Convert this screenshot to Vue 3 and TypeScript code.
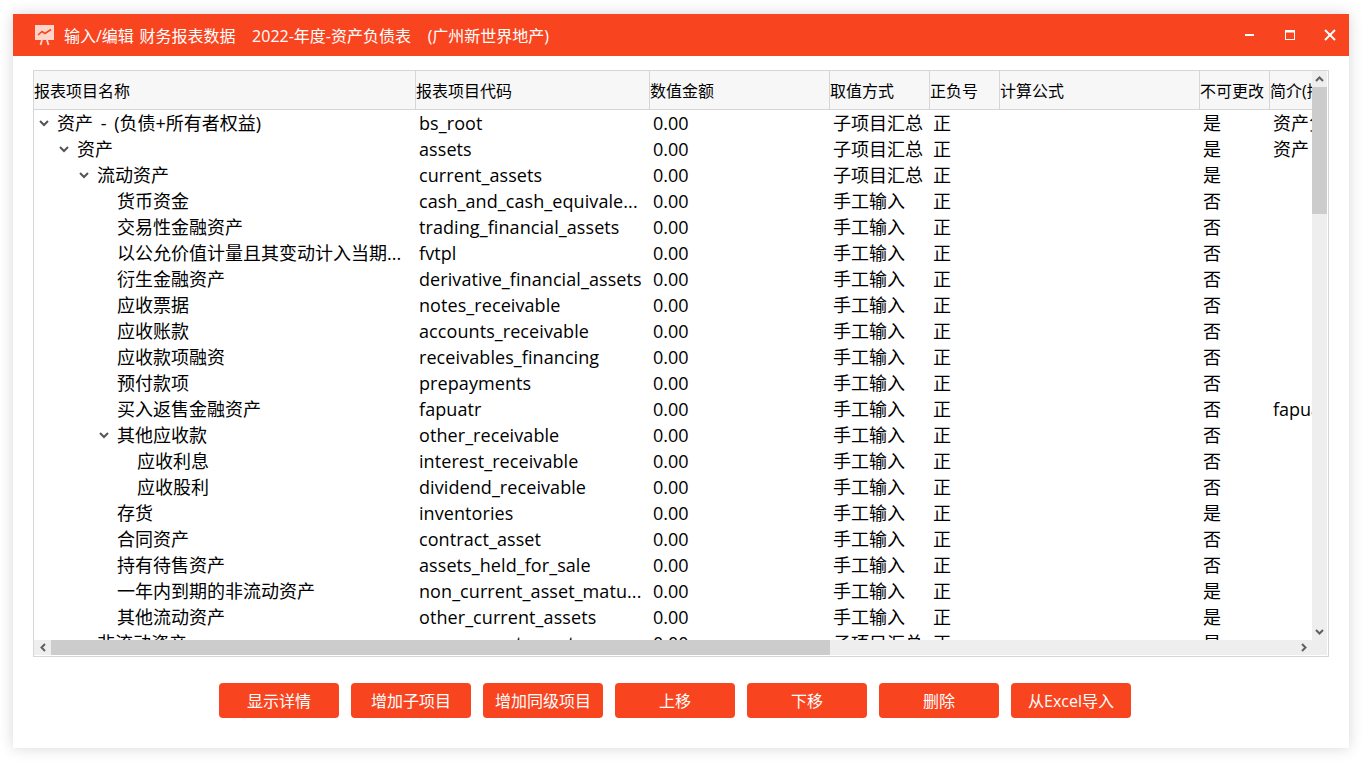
<script setup lang="ts">
interface Row {
  name: string
  code: string
  mode: string
  locked: string
  depth: number
  open?: boolean
  note?: string
}

const titleText = '输入/编辑 财务报表数据   2022-年度-资产负债表   (广州新世界地产)'

const columns: { label: string; width: number }[] = [
  { label: '报表项目名称', width: 382 },
  { label: '报表项目代码', width: 234 },
  { label: '数值金额', width: 180 },
  { label: '取值方式', width: 100 },
  { label: '正负号', width: 70 },
  { label: '计算公式', width: 200 },
  { label: '不可更改', width: 70 },
  { label: '简介(描述)', width: 120 },
]

const gridColumns = columns.map((c) => `${c.width}px`).join(' ')

const hand = '手工输入'
const sum = '子项目汇总'

const rows: Row[] = [
  { name: '资产 - (负债+所有者权益)', code: 'bs_root', mode: sum, locked: '是', depth: 0, open: true, note: '资产负债表' },
  { name: '资产', code: 'assets', mode: sum, locked: '是', depth: 1, open: true, note: '资产' },
  { name: '流动资产', code: 'current_assets', mode: sum, locked: '是', depth: 2, open: true },
  { name: '货币资金', code: 'cash_and_cash_equivale...', mode: hand, locked: '否', depth: 3 },
  { name: '交易性金融资产', code: 'trading_financial_assets', mode: hand, locked: '否', depth: 3 },
  { name: '以公允价值计量且其变动计入当期...', code: 'fvtpl', mode: hand, locked: '否', depth: 3 },
  { name: '衍生金融资产', code: 'derivative_financial_assets', mode: hand, locked: '否', depth: 3 },
  { name: '应收票据', code: 'notes_receivable', mode: hand, locked: '否', depth: 3 },
  { name: '应收账款', code: 'accounts_receivable', mode: hand, locked: '否', depth: 3 },
  { name: '应收款项融资', code: 'receivables_financing', mode: hand, locked: '否', depth: 3 },
  { name: '预付款项', code: 'prepayments', mode: hand, locked: '否', depth: 3 },
  { name: '买入返售金融资产', code: 'fapuatr', mode: hand, locked: '否', depth: 3, note: 'fapuatr' },
  { name: '其他应收款', code: 'other_receivable', mode: hand, locked: '否', depth: 3, open: true },
  { name: '应收利息', code: 'interest_receivable', mode: hand, locked: '否', depth: 4 },
  { name: '应收股利', code: 'dividend_receivable', mode: hand, locked: '否', depth: 4 },
  { name: '存货', code: 'inventories', mode: hand, locked: '是', depth: 3 },
  { name: '合同资产', code: 'contract_asset', mode: hand, locked: '否', depth: 3 },
  { name: '持有待售资产', code: 'assets_held_for_sale', mode: hand, locked: '否', depth: 3 },
  { name: '一年内到期的非流动资产', code: 'non_current_asset_matu...', mode: hand, locked: '是', depth: 3 },
  { name: '其他流动资产', code: 'other_current_assets', mode: hand, locked: '是', depth: 3 },
  { name: '非流动资产', code: 'non_current_assets', mode: sum, locked: '是', depth: 2, open: true },
]

const actions = ['显示详情', '增加子项目', '增加同级项目', '上移', '下移', '删除', '从Excel导入']
</script>

<template>
  <div class="page">
    <div class="window">
      <header class="titlebar">
        <svg class="logo" width="22" height="22" viewBox="0 0 22 22">
          <rect x="1" y="1" width="19" height="15" fill="#fdd5c9" />
          <path d="M4 11 L8 7.5 L11 9.5 L17 5.5" fill="none" stroke="#f9451f" stroke-width="1.6" />
          <path d="M8 16 L6.5 21 M13 16 L14.5 21" stroke="#fdd5c9" stroke-width="1.8" fill="none" />
        </svg>
        <span class="title">{{ titleText }}</span>
        <div class="controls">
          <svg width="12" height="12" viewBox="0 0 12 12"><rect x="1" y="5" width="9" height="2" fill="#fff" /></svg>
          <svg width="12" height="12" viewBox="0 0 12 12">
            <rect x="1.5" y="1.5" width="9" height="9" fill="none" stroke="#fff" />
            <rect x="1" y="1" width="10" height="2.5" fill="#fff" />
          </svg>
          <svg width="12" height="12" viewBox="0 0 12 12">
            <path d="M1 1 L11 11 M11 1 L1 11" stroke="#fff" stroke-width="2" fill="none" />
          </svg>
        </div>
      </header>

      <main class="content">
        <div class="table-box">
          <div class="viewport">
            <div class="sheet">
              <div class="head" :style="{ gridTemplateColumns: gridColumns }">
                <div v-for="c in columns" :key="c.label" class="head-cell">{{ c.label }}</div>
              </div>
              <div
                v-for="r in rows"
                :key="r.code"
                class="row"
                :style="{ gridTemplateColumns: gridColumns }"
              >
                <div class="cell name" :style="{ paddingLeft: `${r.depth * 20}px` }">
                  <span class="caret">
                    <svg v-if="r.open" width="10" height="7" viewBox="0 0 10 7">
                      <path d="M1 1 L5 5 L9 1" fill="none" stroke="#555" stroke-width="2" />
                    </svg>
                  </span>
                  <span>{{ r.name }}</span>
                </div>
                <div class="cell code">{{ r.code }}</div>
                <div class="cell num">0.00</div>
                <div class="cell plain">{{ r.mode }}</div>
                <div class="cell plain">正</div>
                <div class="cell plain"></div>
                <div class="cell plain">{{ r.locked }}</div>
                <div class="cell plain clip">{{ r.note }}</div>
              </div>
            </div>
          </div>

          <div class="vbar">
            <span class="arrow">
              <svg width="9" height="6" viewBox="0 0 9 6"><path d="M1 5 L4.5 1.5 L8 5" fill="none" stroke="#606060" stroke-width="2" /></svg>
            </span>
            <div class="vthumb"></div>
            <span class="arrow bottom">
              <svg width="9" height="6" viewBox="0 0 9 6"><path d="M1 1 L4.5 4.5 L8 1" fill="none" stroke="#606060" stroke-width="2" /></svg>
            </span>
          </div>

          <div class="hbar">
            <span class="arrow side">
              <svg width="6" height="9" viewBox="0 0 6 9"><path d="M5 1 L1.5 4.5 L5 8" fill="none" stroke="#606060" stroke-width="2" /></svg>
            </span>
            <div class="hthumb"></div>
            <span class="arrow side end">
              <svg width="6" height="9" viewBox="0 0 6 9"><path d="M1 1 L4.5 4.5 L1 8" fill="none" stroke="#606060" stroke-width="2" /></svg>
            </span>
          </div>
          <div class="corner"></div>
        </div>

        <div class="actions">
          <button v-for="a in actions" :key="a" class="action" type="button">{{ a }}</button>
        </div>
      </main>
    </div>
  </div>
</template>

<style>
html,
body {
  margin: 0;
  height: 100%;
  overflow: hidden;
  background: #fff;
}
</style>

<style scoped>
.page {
  width: 1369px;
  height: 765px;
  padding: 14px 20px 17px 13px;
  box-sizing: border-box;
  font-family: "Open Sans", "Noto Sans CJK SC", sans-serif;
  color: #000;
}

.window {
  width: 1336px;
  height: 734px;
  display: flex;
  flex-direction: column;
  background: #fff;
  box-shadow: 0 0 14px rgba(0, 0, 0, 0.16);
}

.titlebar {
  height: 42px;
  flex: none;
  display: flex;
  align-items: center;
  background: #f9451f;
  color: #fff;
  padding-left: 21px;
  padding-right: 13px;
}

.logo {
  flex: none;
  margin-right: 8px;
  margin-top: -1px;
}

.title {
  font-size: 16px;
  white-space: pre;
  word-spacing: 1.4px;
  flex: 1;
  margin-top: -1px;
}

.controls {
  display: flex;
  gap: 28px;
}

.controls svg {
  display: block;
}

.content {
  flex: 1;
  min-height: 0;
  padding: 14px 20px 0;
  display: flex;
  flex-direction: column;
}

.table-box {
  width: 1296px;
  height: 587px;
  box-sizing: border-box;
  border: 1px solid #d6d6d6;
  padding: 0 1px 1px 0;
  display: grid;
  grid-template-columns: 1278px 15px;
  grid-template-rows: 569px 15px;
  flex: none;
}

.viewport {
  overflow: hidden;
  min-width: 0;
}

.sheet {
  width: 1356px;
}

.head {
  display: grid;
  height: 38px;
  background: #f7f7f7;
  border-bottom: 1px solid #d6d6d6;
}

.head-cell {
  display: flex;
  align-items: center;
  font-size: 16px;
  line-height: 38px;
  white-space: nowrap;
  overflow: hidden;
  border-right: 1px solid #d6d6d6;
  box-sizing: border-box;
  padding-top: 2px;
}

.row {
  display: grid;
  height: 26px;
  font-size: 18px;
  line-height: 26px;
}

.cell {
  white-space: nowrap;
  overflow: hidden;
}

.name {
  display: flex;
  align-items: center;
  box-sizing: border-box;
  word-spacing: 3px;
}

.caret {
  flex: none;
  width: 23px;
  padding-left: 5px;
  box-sizing: border-box;
  display: flex;
  align-items: center;
  height: 26px;
}

.code,
.plain,
.num {
  padding-left: 3px;
}

.code {
  letter-spacing: 0.08px;
}

.vbar {
  background: #eeeeee;
  display: flex;
  flex-direction: column;
  align-items: center;
}

.arrow {
  flex: none;
  width: 15px;
  height: 16px;
  display: flex;
  align-items: center;
  justify-content: center;
}

.arrow.bottom {
  margin-top: auto;
  height: 15px;
  margin-bottom: 1px;
}

.vthumb {
  width: 15px;
  height: 127px;
  background: #cccccc;
  flex: none;
}

.hbar {
  background: #eeeeee;
  display: flex;
  align-items: center;
  height: 15px;
}

.arrow.side {
  width: 17px;
  height: 15px;
}

.arrow.end {
  margin-left: auto;
}

.hthumb {
  width: 779px;
  height: 15px;
  background: #cccccc;
}

.corner {
  background: #eeeeee;
}

.actions {
  display: flex;
  gap: 12px;
  margin-top: 26px;
  padding-left: 186px;
}

.action {
  width: 120px;
  height: 35px;
  padding: 0 0 2px;
  border: none;
  border-radius: 4px;
  background: #f9451f;
  color: #fff;
  font-family: inherit;
  font-size: 16px;
}
</style>
